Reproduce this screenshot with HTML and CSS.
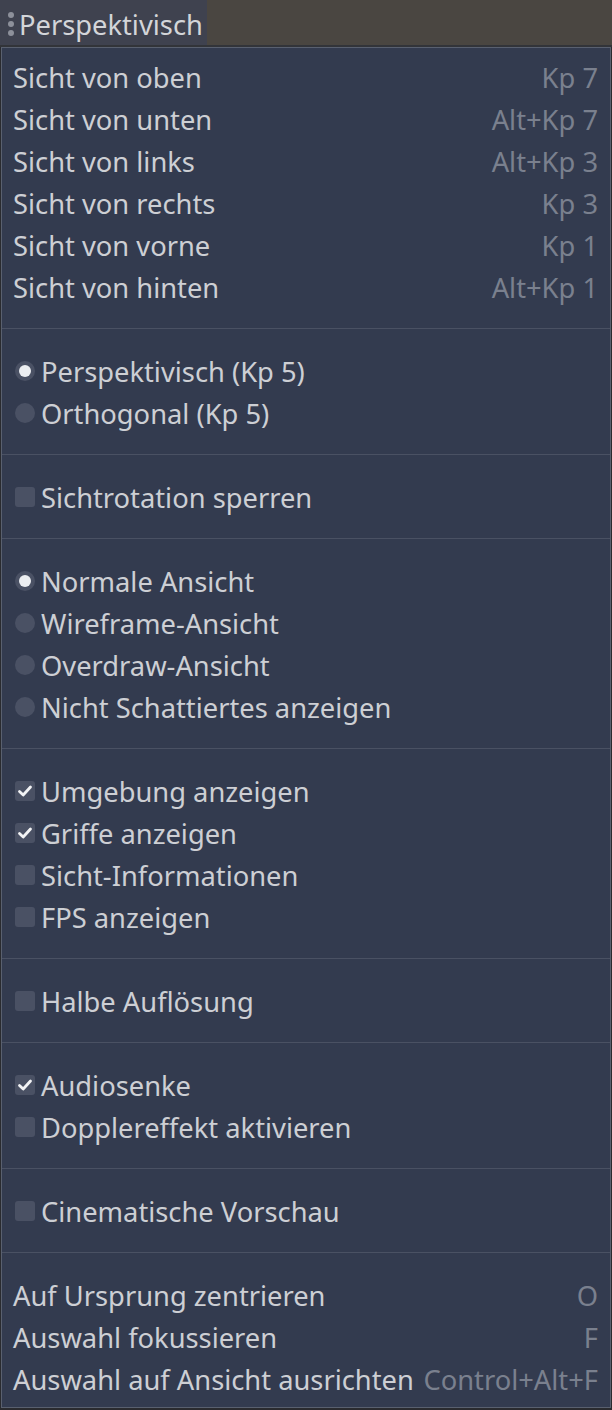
FILE: index.html
```html
<!DOCTYPE html>
<html>
<head>
<meta charset="utf-8">
<link rel="stylesheet" href="styles.css">
</head>
<body>
<div class="topbar">
  <div class="viewbtn">
    <span class="grip"><i></i><i></i><i></i></span>
    <span class="viewlabel">Perspektivisch</span>
  </div>
</div>
<div class="strip"></div>
<div class="menu">
  <div class="item"><span class="lbl">Sicht von oben</span><span class="key">Kp 7</span></div>
  <div class="item"><span class="lbl">Sicht von unten</span><span class="key">Alt+Kp 7</span></div>
  <div class="item"><span class="lbl">Sicht von links</span><span class="key">Alt+Kp 3</span></div>
  <div class="item"><span class="lbl">Sicht von rechts</span><span class="key">Kp 3</span></div>
  <div class="item"><span class="lbl">Sicht von vorne</span><span class="key">Kp 1</span></div>
  <div class="item"><span class="lbl">Sicht von hinten</span><span class="key">Alt+Kp 1</span></div>
  <div class="sep"></div>
  <div class="item mark"><span class="radio on"></span><span class="lbl">Perspektivisch (Kp 5)</span></div>
  <div class="item mark"><span class="radio"></span><span class="lbl">Orthogonal (Kp 5)</span></div>
  <div class="sep"></div>
  <div class="item mark"><span class="check"></span><span class="lbl">Sichtrotation sperren</span></div>
  <div class="sep"></div>
  <div class="item mark"><span class="radio on"></span><span class="lbl">Normale Ansicht</span></div>
  <div class="item mark"><span class="radio"></span><span class="lbl">Wireframe-Ansicht</span></div>
  <div class="item mark"><span class="radio"></span><span class="lbl">Overdraw-Ansicht</span></div>
  <div class="item mark"><span class="radio"></span><span class="lbl">Nicht Schattiertes anzeigen</span></div>
  <div class="sep"></div>
  <div class="item mark"><span class="check on"><svg viewBox="0 0 20 20"><path d="M4.5 10.5 L8.2 14 L15.5 6" /></svg></span><span class="lbl">Umgebung anzeigen</span></div>
  <div class="item mark"><span class="check on"><svg viewBox="0 0 20 20"><path d="M4.5 10.5 L8.2 14 L15.5 6" /></svg></span><span class="lbl">Griffe anzeigen</span></div>
  <div class="item mark"><span class="check"></span><span class="lbl">Sicht-Informationen</span></div>
  <div class="item mark"><span class="check"></span><span class="lbl">FPS anzeigen</span></div>
  <div class="sep"></div>
  <div class="item mark"><span class="check"></span><span class="lbl">Halbe Auflösung</span></div>
  <div class="sep"></div>
  <div class="item mark"><span class="check on"><svg viewBox="0 0 20 20"><path d="M4.5 10.5 L8.2 14 L15.5 6" /></svg></span><span class="lbl">Audiosenke</span></div>
  <div class="item mark"><span class="check"></span><span class="lbl">Dopplereffekt aktivieren</span></div>
  <div class="sep"></div>
  <div class="item mark"><span class="check"></span><span class="lbl">Cinematische Vorschau</span></div>
  <div class="sep"></div>
  <div class="item"><span class="lbl">Auf Ursprung zentrieren</span><span class="key">O</span></div>
  <div class="item"><span class="lbl">Auswahl fokussieren</span><span class="key">F</span></div>
  <div class="item"><span class="lbl">Auswahl auf Ansicht ausrichten</span><span class="key">Control+Alt+F</span></div>
</div>
</body>
</html>
```

FILE: styles.css
```css
html, body {
  margin: 0;
  padding: 0;
}
body {
  width: 612px;
  height: 1410px;
  background: #2a2b2f;
  font-family: "Noto Sans", "DejaVu Sans", sans-serif;
  overflow: hidden;
}
.topbar {
  height: 45px;
  background: #4a4641;
  display: flex;
}
.viewbtn {
  width: 207px;
  height: 45px;
  background: #3f424f;
  display: flex;
  align-items: center;
  box-sizing: border-box;
  padding-left: 8px;
  gap: 5px;
}
.grip {
  display: flex;
  flex-direction: column;
  gap: 3px;
  margin-top: 2px;
}
.grip i {
  display: block;
  width: 6px;
  height: 6px;
  border-radius: 50%;
  background: #8d909a;
}
.viewlabel {
  color: #d3d5d9;
  font-size: 27.3px;
  line-height: 45px;
  padding-top: 4px;
}
.strip {
  height: 2px;
  background: #323439;
}
.menu {
  width: 610px;
  box-sizing: border-box;
  margin-left: 1px;
  background: #333b4f;
  border: 1px solid #59606f;
  padding: 8px 0 7px 0;
  display: flex;
  flex-direction: column;
}
.item {
  height: 42px;
  display: flex;
  align-items: center;
  padding: 0 12px 0 11px;
  color: #cdcfd4;
  font-size: 27.3px;
  white-space: nowrap;
}
.item.mark {
  padding-left: 13px;
}
.lbl {
  flex: 1;
}
.key {
  color: #7a808e;
}
.sep {
  height: 42px;
  box-sizing: border-box;
  padding-top: 20px;
}
.sep::before {
  content: "";
  display: block;
  width: 100%;
  height: 1px;
  background: #4a5163;
}
.check, .radio {
  width: 20px;
  height: 20px;
  flex: none;
  margin-right: 6px;
  background: #4a5164;
  box-sizing: border-box;
  display: flex;
  align-items: center;
  justify-content: center;
}
.check {
  border-radius: 3px;
}
.check svg {
  width: 20px;
  height: 20px;
}
.check svg path {
  fill: none;
  stroke: #f2f3f5;
  stroke-width: 2.8;
  stroke-linecap: round;
  stroke-linejoin: round;
}
.radio {
  border-radius: 50%;
}
.radio.on::after {
  content: "";
  width: 12px;
  height: 12px;
  border-radius: 50%;
  background: #eceef1;
}
```
